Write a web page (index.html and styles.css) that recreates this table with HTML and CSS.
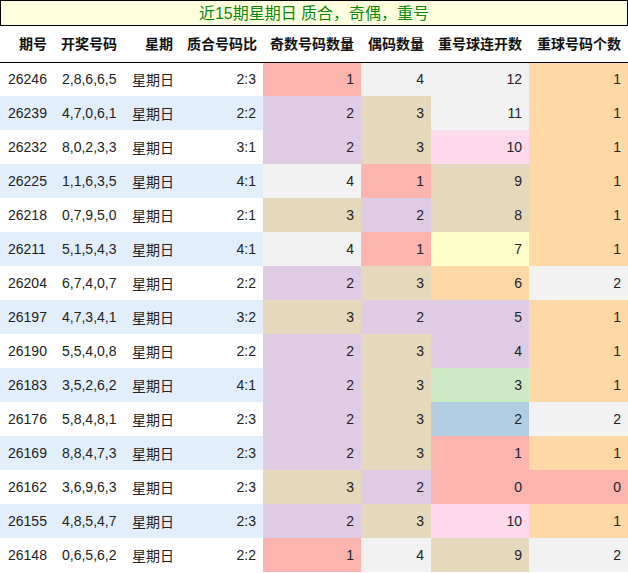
FILE: index.html
```html
<!DOCTYPE html>
<html lang="zh">
<head>
<meta charset="utf-8">
<title>近15期星期日 质合，奇偶，重号</title>
<link rel="stylesheet" href="styles.css">
</head>
<body>
<div class="title">近15期星期日 质合，奇偶，重号</div>
<table class="grid">
<colgroup>
<col class="w1"><col class="w2"><col class="w3"><col class="w4"><col class="w5"><col class="w6"><col class="w7"><col class="w8">
</colgroup>
<thead>
<tr><th>期号</th><th>开奖号码</th><th>星期</th><th>质合号码比</th><th>奇数号码数量</th><th>偶码数量</th><th>重号球连开数</th><th>重球号码个数</th></tr>
</thead>
<tbody>
<tr><td class="l">26246</td><td class="l">2,8,6,6,5</td><td class="l">星期日</td><td>2:3</td><td class="salmon">1</td><td class="grey">4</td><td class="grey">12</td><td class="orange">1</td></tr>
<tr><td class="l">26239</td><td class="l">4,7,0,6,1</td><td class="l">星期日</td><td>2:2</td><td class="purple">2</td><td class="tan">3</td><td class="grey">11</td><td class="orange">1</td></tr>
<tr><td class="l">26232</td><td class="l">8,0,2,3,3</td><td class="l">星期日</td><td>3:1</td><td class="purple">2</td><td class="tan">3</td><td class="pink">10</td><td class="orange">1</td></tr>
<tr><td class="l">26225</td><td class="l">1,1,6,3,5</td><td class="l">星期日</td><td>4:1</td><td class="grey">4</td><td class="salmon">1</td><td class="tan">9</td><td class="orange">1</td></tr>
<tr><td class="l">26218</td><td class="l">0,7,9,5,0</td><td class="l">星期日</td><td>2:1</td><td class="tan">3</td><td class="purple">2</td><td class="tan">8</td><td class="orange">1</td></tr>
<tr><td class="l">26211</td><td class="l">5,1,5,4,3</td><td class="l">星期日</td><td>4:1</td><td class="grey">4</td><td class="salmon">1</td><td class="yellow">7</td><td class="orange">1</td></tr>
<tr><td class="l">26204</td><td class="l">6,7,4,0,7</td><td class="l">星期日</td><td>2:2</td><td class="purple">2</td><td class="tan">3</td><td class="orange">6</td><td class="grey">2</td></tr>
<tr><td class="l">26197</td><td class="l">4,7,3,4,1</td><td class="l">星期日</td><td>3:2</td><td class="tan">3</td><td class="purple">2</td><td class="purple">5</td><td class="orange">1</td></tr>
<tr><td class="l">26190</td><td class="l">5,5,4,0,8</td><td class="l">星期日</td><td>2:2</td><td class="purple">2</td><td class="tan">3</td><td class="purple">4</td><td class="orange">1</td></tr>
<tr><td class="l">26183</td><td class="l">3,5,2,6,2</td><td class="l">星期日</td><td>4:1</td><td class="purple">2</td><td class="tan">3</td><td class="green">3</td><td class="orange">1</td></tr>
<tr><td class="l">26176</td><td class="l">5,8,4,8,1</td><td class="l">星期日</td><td>2:3</td><td class="purple">2</td><td class="tan">3</td><td class="blue">2</td><td class="grey">2</td></tr>
<tr><td class="l">26169</td><td class="l">8,8,4,7,3</td><td class="l">星期日</td><td>2:3</td><td class="purple">2</td><td class="tan">3</td><td class="salmon">1</td><td class="orange">1</td></tr>
<tr><td class="l">26162</td><td class="l">3,6,9,6,3</td><td class="l">星期日</td><td>2:3</td><td class="tan">3</td><td class="purple">2</td><td class="salmon">0</td><td class="salmon">0</td></tr>
<tr><td class="l">26155</td><td class="l">4,8,5,4,7</td><td class="l">星期日</td><td>2:3</td><td class="purple">2</td><td class="tan">3</td><td class="pink">10</td><td class="orange">1</td></tr>
<tr><td class="l">26148</td><td class="l">0,6,5,6,2</td><td class="l">星期日</td><td>2:2</td><td class="salmon">1</td><td class="grey">4</td><td class="tan">9</td><td class="grey">2</td></tr>
</tbody>
</table>
</body>
</html>
```
FILE: styles.css
```css
html, body {
  margin: 0;
  padding: 0;
  background: #ffffff;
}
body {
  font-family: "Liberation Sans", "Noto Sans CJK SC", sans-serif;
  font-size: 14px;
  color: #222222;
  width: 628px;
}
.title {
  box-sizing: border-box;
  height: 26px;
  border: 1px solid #000000;
  background: #ffffe0;
  color: #0a8a0a;
  font-size: 16px;
  line-height: 24px;
  padding-top: 1px;
  text-align: center;
}
.grid {
  width: 628px;
  border-collapse: collapse;
  table-layout: fixed;
  border-spacing: 0;
}
.w1 { width: 54px; }
.w2 { width: 70px; }
.w3 { width: 56px; }
.w4 { width: 83px; }
.w5 { width: 98px; }
.w6 { width: 70px; }
.w7 { width: 98px; }
.w8 { width: 99px; }
.grid th {
  height: 36px;
  padding: 0 7px 1px 7px;
  text-align: right;
  font-weight: bold;
  border-bottom: 1px solid #000000;
  white-space: nowrap;
  color: #111111;
  box-sizing: border-box;
}
.grid td {
  height: 34px;
  padding: 0 7px 0 8px;
  text-align: right;
  white-space: nowrap;
  box-sizing: border-box;
}
.grid td.l { text-align: left; }
.grid tbody tr:nth-child(even) { background: #e2effa; }
.grid td.salmon { background: #fbb4ae; }
.grid td.blue { background: #b3cde3; }
.grid td.green { background: #ccebc5; }
.grid td.purple { background: #decbe4; }
.grid td.orange { background: #fed9a6; }
.grid td.yellow { background: #ffffcc; }
.grid td.tan { background: #e5d8bd; }
.grid td.pink { background: #fddaec; }
.grid td.grey { background: #f2f2f2; }
```
